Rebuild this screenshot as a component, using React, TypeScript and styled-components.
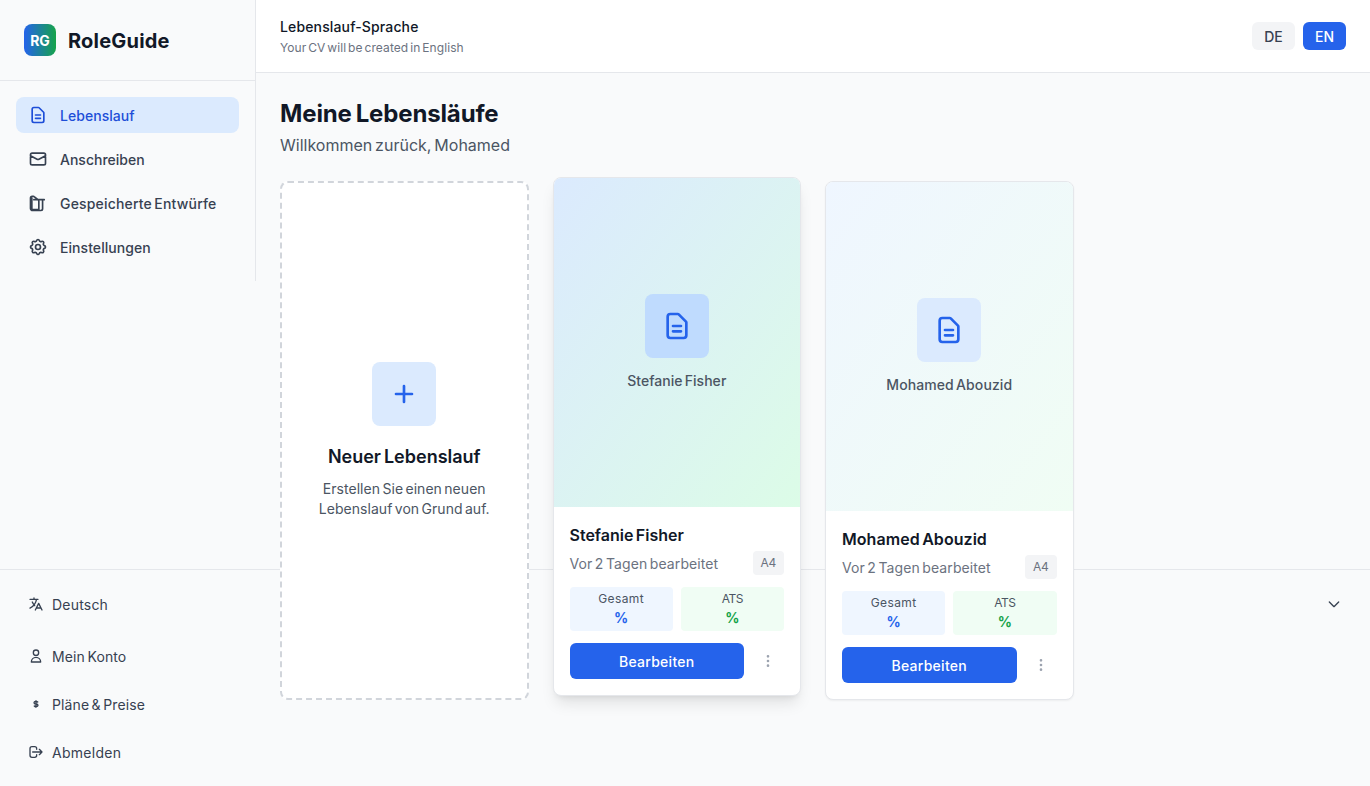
import React from "react";
import styled, { createGlobalStyle, css } from "styled-components";

const GlobalStyle = createGlobalStyle`
  *, *::before, *::after { box-sizing: border-box; }
  body {
    margin: 0;
    background: #f9fafb;
    color: #111827;
    font-family: Inter, "Open Sans", sans-serif;
    word-spacing: -0.1em;
  }
  h1, h2, h3, p { margin: 0; }
  button { font: inherit; word-spacing: inherit; border: 0; padding: 0; cursor: pointer; }
  a { color: inherit; text-decoration: none; }
`;

const icons = {
  document:
    "M9 12h6m-6 4h6m2 5H7a2 2 0 01-2-2V5a2 2 0 012-2h5.586a1 1 0 01.707.293l5.414 5.414a1 1 0 01.293.707V19a2 2 0 01-2 2z",
  mail: "M3 8l7.89 4.26a2 2 0 002.22 0L21 8M5 19h14a2 2 0 002-2V7a2 2 0 00-2-2H5a2 2 0 00-2 2v10a2 2 0 002 2z",
  drafts:
    "M3 6v12.5a2.5 2.5 0 002.5 2.5H15.5a2 2 0 002-2V8M3 6a2 2 0 012-2h1.6a1 1 0 01.7.3L12 8M4.6 6v14M7 8h12.5M5 20h8M10.5 7.5a2.5 2.5 0 012.5 2.5v10",
  cog: "M10.325 4.317c.426-1.756 2.924-1.756 3.35 0a1.724 1.724 0 002.573 1.066c1.543-.94 3.31.826 2.37 2.37a1.724 1.724 0 001.065 2.572c1.756.426 1.756 2.924 0 3.35a1.724 1.724 0 00-1.066 2.573c.94 1.543-.826 3.31-2.37 2.37a1.724 1.724 0 00-2.572 1.065c-.426 1.756-2.924 1.756-3.35 0a1.724 1.724 0 00-2.573-1.066c-1.543.94-3.31-.826-2.37-2.37a1.724 1.724 0 00-1.065-2.572c-1.756-.426-1.756-2.924 0-3.35a1.724 1.724 0 001.066-2.573c-.94-1.543.826-3.31 2.37-2.37.996.608 2.296.07 2.572-1.065zM15 12a3 3 0 11-6 0 3 3 0 016 0z",
  translate:
    "M3 5h12M9 3v2m1.048 9.5A18.022 18.022 0 016.412 9m6.088 9h7M11 21l5-10 5 10M12.751 5C11.783 10.77 8.07 15.61 3 18.129",
  user: "M16 7a4 4 0 11-8 0 4 4 0 018 0zM12 14a7 7 0 00-7 7h14a7 7 0 00-7-7z",
  dollar:
    "M12 8c-1.657 0-3 .895-3 2s1.343 2 3 2 3 .895 3 2-1.343 2-3 2m0-8c1.11 0 2.08.402 2.599 1M12 8V7m0 1v8m0 0v1m0-1c-1.11 0-2.08-.402-2.599-1",
  logout:
    "M17 16l4-4m0 0l-4-4m4 4H7m6 4v1a3 3 0 01-3 3H6a3 3 0 01-3-3V7a3 3 0 013-3h4a3 3 0 013 3v1",
  chevron: "M19 9l-7 7-7-7",
  plus: "M12 6v12m6-6H6",
  dots: "M12 5v.01M12 12v.01M12 19v.01M12 6a1 1 0 110-2 1 1 0 010 2zm0 7a1 1 0 110-2 1 1 0 010 2zm0 7a1 1 0 110-2 1 1 0 010 2z",
};

const Glyph = styled.svg<{ $size: number }>`
  display: block;
  flex: none;
  width: ${(p) => p.$size}px;
  height: ${(p) => p.$size}px;
  fill: none;
  stroke: currentColor;
  stroke-width: 2;
  stroke-linecap: round;
  stroke-linejoin: round;
`;

const Icon = ({ name, size }: { name: keyof typeof icons; size: number }) => (
  <Glyph $size={size} viewBox="0 0 24 24" aria-hidden="true">
    <path d={icons[name]} />
  </Glyph>
);

/* Lowers the baseline by a pixel while keeping the box's outer height. */
const lowered = css`
  padding-top: 1px;
  margin-bottom: -1px;
`;

const Text = styled.span<{ $track?: number }>`
  letter-spacing: ${(p) => p.$track ?? 0}px;
`;

const Label = styled(Text)`
  display: block;
  ${lowered}
`;

const Page = styled.div`
  display: grid;
  grid-template-columns: 256px 1fr;
  grid-template-rows: 1fr auto;
  height: 786px;
`;

const Sidebar = styled.aside`
  grid-area: 1 / 1;
  align-self: start;
  border-right: 1px solid #e5e7eb;
`;

const Brand = styled.div`
  display: flex;
  align-items: center;
  gap: 12px;
  padding: 24px;
  border-bottom: 1px solid #e5e7eb;
`;

const Logo = styled.div`
  display: grid;
  place-items: center;
  width: 32px;
  height: 32px;
  border-radius: 8px;
  background: linear-gradient(to right, #2563eb, #16a34a);
  color: #fff;
  font-size: 14px;
  font-weight: 700;
`;

const BrandName = styled.span`
  font-size: 20px;
  line-height: 32px;
  font-weight: 700;
  letter-spacing: 0.2px;
  ${lowered}
`;

const Nav = styled.nav`
  display: flex;
  flex-direction: column;
  gap: 8px;
  padding: 16px;
`;

const NavItem = styled.a<{ $active?: boolean }>`
  display: flex;
  align-items: center;
  gap: 12px;
  padding: 8px 12px;
  border-radius: 8px;
  font-size: 14px;
  line-height: 20px;
  font-weight: 450;
  color: ${(p) => (p.$active ? "#1d4ed8" : "#374151")};
  background: ${(p) => (p.$active ? "#dbeafe" : "transparent")};
`;

const Footer = styled.footer`
  grid-area: 2 / 1 / 3 / -1;
  padding: 16px;
  border-top: 1px solid #e5e7eb;
  font-size: 14px;
  line-height: 20px;
  color: #374151;
`;

const FooterRow = styled.a`
  display: flex;
  align-items: center;
  gap: 8px;
  padding: 8px 12px;
  & + & { margin-top: 12px; }
`;

const LanguageRow = styled(FooterRow)`
  margin-bottom: 16px;
  & > :last-child { margin-left: auto; }
`;

const Main = styled.main`
  grid-area: 1 / 2 / 3 / 3;
  z-index: 1;
`;

const TopBar = styled.header`
  display: flex;
  align-items: center;
  justify-content: space-between;
  height: 73px;
  padding: 0 24px;
  background: #fff;
  border-bottom: 1px solid #e5e7eb;
`;

const TopTitle = styled.h3`
  font-size: 14px;
  line-height: 20px;
  font-weight: 450;
  letter-spacing: 0.14px;
  padding-top: 1px;
`;

const TopHint = styled.p`
  margin-top: 3px;
  font-size: 12px;
  line-height: 16px;
  letter-spacing: 0.09px;
  color: #6b7280;
`;

const LangSwitch = styled.div`
  display: flex;
  gap: 8px;
`;

const LangButton = styled.button<{ $active?: boolean }>`
  width: 43px;
  height: 28px;
  border-radius: 6px;
  font-size: 14px;
  font-weight: 450;
  color: ${(p) => (p.$active ? "#fff" : "#374151")};
  background: ${(p) => (p.$active ? "#2563eb" : "#f3f4f6")};
`;

const Content = styled.section`
  padding: 24px;
`;

const Heading = styled.h1`
  font-size: 24px;
  line-height: 32px;
  font-weight: 700;
  letter-spacing: -0.14px;
  ${lowered}
`;

const Welcome = styled.p`
  margin: 4px 0 24px;
  font-size: 16px;
  line-height: 24px;
  color: #4b5563;
`;

const CardGrid = styled.div`
  display: grid;
  grid-template-columns: repeat(4, 1fr);
  gap: 24px;
`;

const NewCard = styled.button`
  display: flex;
  flex-direction: column;
  align-items: center;
  justify-content: center;
  padding: 32px;
  border: 2px dashed #d1d5db;
  border-radius: 8px;
  background: #fff;
`;

const IconTile = styled.div<{ $strong?: boolean }>`
  display: grid;
  place-items: center;
  width: 64px;
  height: 64px;
  border-radius: 8px;
  color: #2563eb;
  background: ${(p) => (p.$strong ? "#bfdbfe" : "#dbeafe")};
`;

const NewTitle = styled.h3`
  margin: 17px 0 8px;
  font-size: 18px;
  line-height: 28px;
  font-weight: 600;
  color: #111827;
`;

const NewHint = styled.p`
  margin-bottom: -1px;
  font-size: 14px;
  line-height: 20px;
  letter-spacing: 0.04px;
  color: #4b5563;
  white-space: nowrap;
`;

const Card = styled.article<{ $raised?: boolean }>`
  overflow: hidden;
  border: 1px solid #e5e7eb;
  border-radius: 8px;
  background: #fff;
  box-shadow: 0 1px 2px rgba(0, 0, 0, 0.05);
  ${(p) =>
    p.$raised &&
    css`
      transform: translateY(-4px);
      box-shadow: 0 10px 15px -3px rgba(0, 0, 0, 0.1), 0 4px 6px -4px rgba(0, 0, 0, 0.1);
    `}
`;

const Preview = styled.div<{ $strong?: boolean }>`
  display: flex;
  flex-direction: column;
  align-items: center;
  justify-content: center;
  gap: 12px;
  aspect-ratio: 3 / 4;
  background: ${(p) =>
    p.$strong
      ? "linear-gradient(to bottom right, #dbeafe, #dcfce7)"
      : "linear-gradient(to bottom right, #eff6ff, #f0fdf4)"};
`;

const PreviewName = styled.p`
  font-size: 14px;
  line-height: 20px;
  font-weight: 450;
  color: #4b5563;
  ${lowered}
`;

const CardBody = styled.div`
  padding: 16px;
`;

const CardTitle = styled.h3`
  margin-bottom: 4px;
  font-size: 16px;
  line-height: 24px;
  font-weight: 600;
`;

const Meta = styled.div`
  display: flex;
  align-items: center;
  justify-content: space-between;
  margin-bottom: 12px;
  font-size: 14px;
  line-height: 20px;
  color: #6b7280;
`;

const Format = styled.span`
  padding: 4px 8px;
  border-radius: 4px;
  background: #f3f4f6;
  font-size: 12px;
  line-height: 16px;
  letter-spacing: -0.3px;
`;

const Scores = styled.div`
  display: grid;
  grid-template-columns: 1fr 1fr;
  gap: 8px;
  margin-bottom: 12px;
`;

const Score = styled.div<{ $green?: boolean }>`
  height: 44px;
  padding: 4px;
  border-radius: 4px;
  text-align: center;
  background: ${(p) => (p.$green ? "#f0fdf4" : "#eff6ff")};
  color: ${(p) => (p.$green ? "#16a34a" : "#2563eb")};
`;

const ScoreLabel = styled.div`
  font-size: 12px;
  line-height: 16px;
  color: #4b5563;
`;

const ScoreValue = styled.div`
  font-size: 14px;
  line-height: 20px;
  font-weight: 700;
  ${lowered}
`;

const Actions = styled.div`
  display: flex;
  align-items: center;
  gap: 8px;
`;

const EditButton = styled.button`
  flex: 1;
  height: 36px;
  padding-top: 2px;
  border-radius: 6px;
  background: #2563eb;
  color: #fff;
  font-size: 14px;
  font-weight: 450;
  letter-spacing: 0.26px;
`;

const MoreButton = styled.button`
  display: grid;
  place-items: center;
  width: 32px;
  height: 32px;
  background: transparent;
  color: #9ca3af;
`;

const navItems = [
  { icon: "document", label: "Lebenslauf", track: 0.04, active: true },
  { icon: "mail", label: "Anschreiben", track: 0, active: false },
  { icon: "drafts", label: "Gespeicherte Entwürfe", track: 0.18, active: false },
  { icon: "cog", label: "Einstellungen", track: 0.06, active: false },
] as const;

const accountItems = [
  { icon: "user", label: "Mein Konto", track: 0.12 },
  { icon: "dollar", label: "Pläne & Preise", track: 0.11 },
  { icon: "logout", label: "Abmelden", track: 0.28 },
] as const;

const resumes = [
  { name: "Stefanie Fisher", raised: true, track: 0 },
  { name: "Mohamed Abouzid", raised: false, track: 0.05 },
];

const ResumeCard = ({ name, raised, track }: (typeof resumes)[number]) => (
  <Card $raised={raised}>
    <Preview $strong={raised}>
      <IconTile $strong={raised}>
        <Icon name="document" size={32} />
      </IconTile>
      <PreviewName>
        <Text $track={track + 0.04}>{name}</Text>
      </PreviewName>
    </Preview>
    <CardBody>
      <CardTitle>
        <Text $track={track}>{name}</Text>
      </CardTitle>
      <Meta>
        <Label $track={0.1}>Vor 2 Tagen bearbeitet</Label>
        <Format>A4</Format>
      </Meta>
      <Scores>
        <Score>
          <ScoreLabel>
            <Text $track={0.4}>Gesamt</Text>
          </ScoreLabel>
          <ScoreValue>%</ScoreValue>
        </Score>
        <Score $green>
          <ScoreLabel>
            <Text $track={-0.5}>ATS</Text>
          </ScoreLabel>
          <ScoreValue>%</ScoreValue>
        </Score>
      </Scores>
      <Actions>
        <EditButton>Bearbeiten</EditButton>
        <MoreButton aria-label="Mehr">
          <Icon name="dots" size={16} />
        </MoreButton>
      </Actions>
    </CardBody>
  </Card>
);

export default function App() {
  return (
    <>
      <GlobalStyle />
      <Page>
        <Sidebar>
          <Brand>
            <Logo>RG</Logo>
            <BrandName>RoleGuide</BrandName>
          </Brand>
          <Nav>
            {navItems.map((item) => (
              <NavItem key={item.label} $active={item.active} href="#">
                <Icon name={item.icon} size={20} />
                <Label $track={item.track}>{item.label}</Label>
              </NavItem>
            ))}
          </Nav>
        </Sidebar>

        <Footer>
          <LanguageRow href="#">
            <Icon name="translate" size={16} />
            <Label $track={0.2}>Deutsch</Label>
            <Icon name="chevron" size={16} />
          </LanguageRow>
          {accountItems.map((item) => (
            <FooterRow key={item.label} href="#">
              <Icon name={item.icon} size={16} />
              <Label $track={item.track}>{item.label}</Label>
            </FooterRow>
          ))}
        </Footer>

        <Main>
          <TopBar>
            <div>
              <TopTitle>Lebenslauf-Sprache</TopTitle>
              <TopHint>Your CV will be created in English</TopHint>
            </div>
            <LangSwitch>
              <LangButton>DE</LangButton>
              <LangButton $active>EN</LangButton>
            </LangSwitch>
          </TopBar>
          <Content>
            <Heading>Meine Lebensläufe</Heading>
            <Welcome>Willkommen zurück, Mohamed</Welcome>
            <CardGrid>
              <NewCard>
                <IconTile>
                  <Icon name="plus" size={32} />
                </IconTile>
                <NewTitle>Neuer Lebenslauf</NewTitle>
                <NewHint>
                  Erstellen Sie einen neuen
                  <br />
                  Lebenslauf von Grund auf.
                </NewHint>
              </NewCard>
              {resumes.map((resume) => (
                <ResumeCard key={resume.name} {...resume} />
              ))}
            </CardGrid>
          </Content>
        </Main>
      </Page>
    </>
  );
}
